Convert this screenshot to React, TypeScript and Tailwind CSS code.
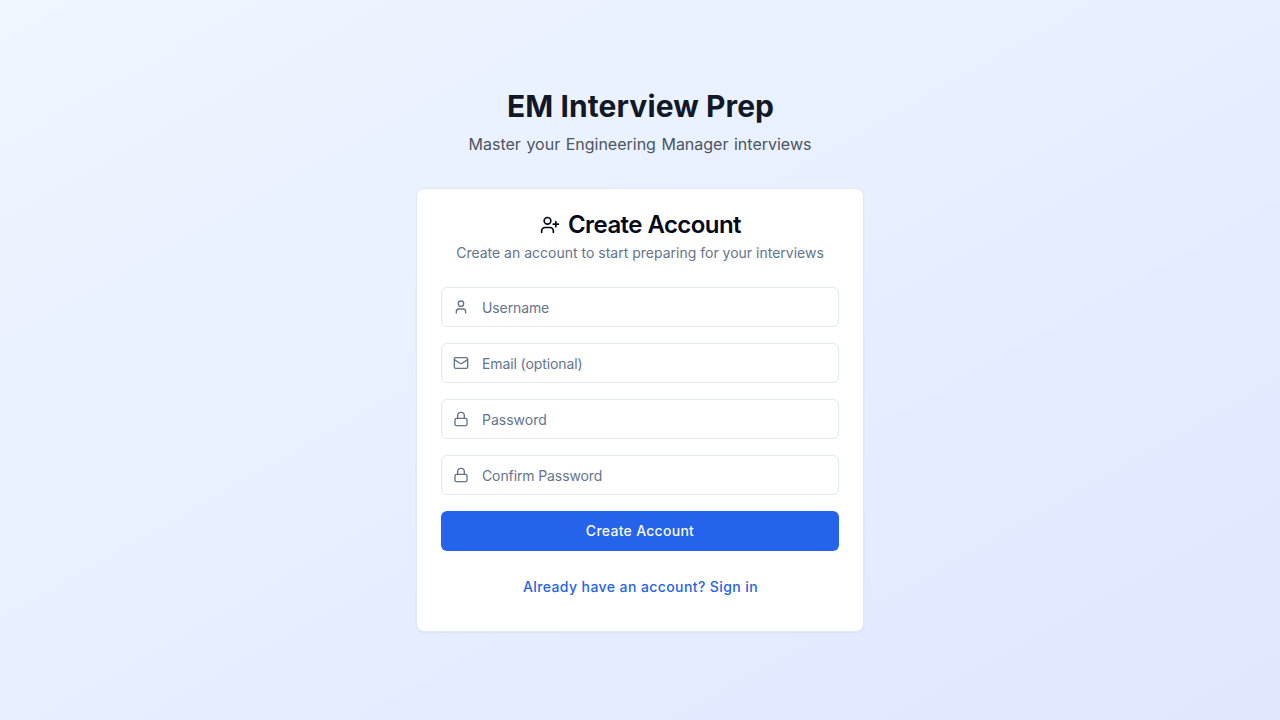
import { Lock, Mail, User, UserPlus, type LucideIcon } from "lucide-react";

type FieldProps = { icon: LucideIcon; type: string; placeholder: string };

function Field({ icon: Icon, type, placeholder }: FieldProps) {
  return (
    <div className="relative">
      <Icon className="absolute left-3 top-3 h-4 w-4 text-[#64748b]" />
      <input
        type={type}
        placeholder={placeholder}
        className={`block h-10 w-full rounded-md border border-[#e2e8f0] bg-white py-2 pl-10 pr-3 text-sm placeholder:text-[#64748b] focus:outline-none ${placeholder === "Password" ? "tracking-normal" : "tracking-[-0.11px]"}`}
      />
    </div>
  );
}

export default function App() {
  return (
    <div className="flex min-h-screen items-center justify-center bg-[linear-gradient(to_bottom_right,#eff6ff,#e0e7ff)] p-4 font-['Inter',sans-serif]">
      <div className="w-full max-w-md">
        <div className="mb-8 text-center">
          <h1 className="mb-2 pl-px text-3xl font-bold tracking-[0.1px] text-[#111827]">EM Interview Prep</h1>
          <p className="text-[#4b5563] [word-spacing:1px]">Master your Engineering Manager interviews</p>
        </div>
        <div className="rounded-lg border border-[#e2e8f0] bg-white text-[#020817] shadow-xs">
          <div className="flex flex-col space-y-1.5 p-6 text-center">
            <h3 className="flex items-center justify-center gap-2 pl-px text-2xl font-semibold leading-none tracking-[-0.56px]">
              <UserPlus className="h-5 w-5" />
              Create Account
            </h3>
            <p className="text-sm text-[#64748b]">Create an account to start preparing for your interviews</p>
          </div>
          <div className="p-6 pt-0">
            <form className="space-y-4">
              <Field icon={User} type="text" placeholder="Username" />
              <Field icon={Mail} type="email" placeholder="Email (optional)" />
              <Field icon={Lock} type="password" placeholder="Password" />
              <Field icon={Lock} type="password" placeholder="Confirm Password" />
              <button type="submit" className="flex h-10 w-full items-center justify-center rounded-md bg-[#2563eb] px-4 py-2 text-sm font-medium tracking-[0.28px] text-[#f8fafc]">
                Create Account
              </button>
            </form>
            <div className="mt-4 pl-px text-center">
              <button type="button" className="inline-flex h-10 items-center justify-center px-4 py-2 text-sm font-medium tracking-[0.41px] text-[#2563eb]">
                Already have an account? Sign in
              </button>
            </div>
          </div>
        </div>
      </div>
    </div>
  );
}
